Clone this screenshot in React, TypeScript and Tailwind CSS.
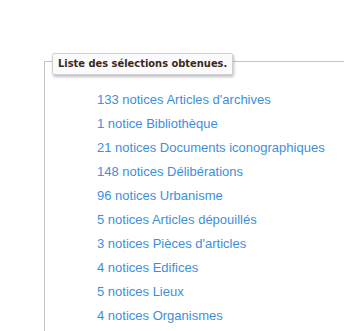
import React from "react";

const items = [
  "133 notices Articles d'archives",
  "1 notice Bibliothèque",
  "21 notices Documents iconographiques",
  "148 notices Délibérations",
  "96 notices Urbanisme",
  "5 notices Articles dépouillés",
  "3 notices Pièces d'articles",
  "4 notices Edifices",
  "5 notices Lieux",
  "4 notices Organismes",
];

export default function App() {
  return (
    <div className="w-[344px] h-[331px] bg-white overflow-hidden">
      <div className="relative ml-[44px] mt-[61px] border-l border-t border-[#c4c4c4] h-[400px]">
        <div
          className="absolute left-[7px] top-[-9px] h-[22px] px-[5px] flex items-center bg-[#fbfbfd] border border-[#d0d0d4] rounded-[2px] shadow-[1px_2px_3px_rgba(0,0,0,0.25)] text-[11px] font-bold text-[#3a2a18]"
          style={{ fontFamily: "'DejaVu Sans Condensed', 'DejaVu Sans', sans-serif", fontStretch: "condensed" }}
        >
          Liste des sélections obtenues.
        </div>
        <ul
          className="pt-[26px] pl-[52px] text-[13px] leading-[24px] text-[#3d8fdc]"
          style={{ fontFamily: "'Liberation Sans', Arial, sans-serif" }}
        >
          {items.map((t) => (
            <li key={t}>{t}</li>
          ))}
        </ul>
      </div>
    </div>
  );
}
